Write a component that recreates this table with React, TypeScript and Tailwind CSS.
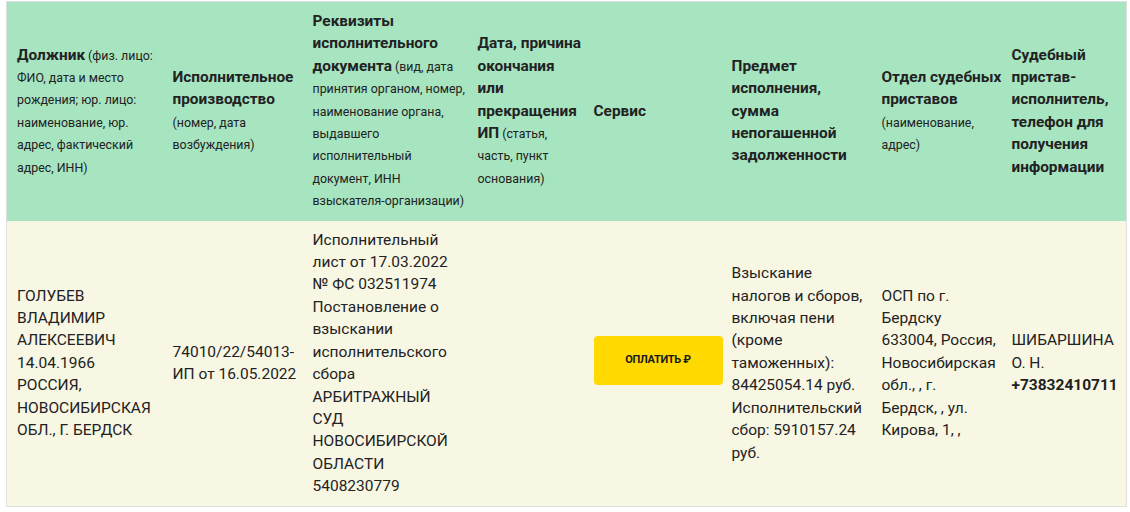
import React from "react";

const th = "align-middle text-left font-normal text-[12px] leading-[22.4px] pl-[10px] pr-0 pt-[9px] pb-[8px]";
const td = "align-middle text-left pl-[10px] pr-0 py-[8px]";
const B = ({ children }: { children: React.ReactNode }) => (
  <span className="font-bold text-[15.4px] leading-none">{children}</span>
);
const S = ({ children }: { children: React.ReactNode }) => (
  <span className="text-[12.4px] leading-none">{children}</span>
);

export default function App() {
  return (
    <div className="w-[1130px] h-[512px] bg-white pl-[6px] pt-[1px]" style={{ fontFamily: "Roboto, 'Noto Sans', sans-serif" }}>
      <table className="table-fixed w-[1120px] border-collapse border border-[#e0e0e0] text-[#222222]">
        <colgroup>
          <col className="w-[156px]" />
          <col className="w-[140px]" />
          <col className="w-[165px]" />
          <col className="w-[116px]" />
          <col className="w-[138px]" />
          <col className="w-[150px]" />
          <col className="w-[130px]" />
          <col className="w-[125px]" />
        </colgroup>
        <thead>
          <tr className="bg-[#a7e4c0] h-[218px]">
            <th className={th}>
              <B>Должник</B> <S>(физ. лицо: ФИО, дата и место рождения; юр. лицо: наименование, юр. адрес, фактический адрес, ИНН)</S>
            </th>
            <th className={th}>
              <B>Исполнительное производство</B> <S>(номер, дата возбуждения)</S>
            </th>
            <th className={th}>
              <B>Реквизиты исполнительного документа</B> <S>(вид, дата принятия органом, номер, наименование органа, выдавшего исполнительный документ, ИНН взыскателя-организации)</S>
            </th>
            <th className={th}>
              <B>Дата, причина окончания или прекращения ИП</B> <S>(статья, часть, пункт основания)</S>
            </th>
            <th className={th}>
              <B>Сервис</B>
            </th>
            <th className={th}>
              <B>Предмет исполнения, сумма непогашенной задолженности</B>
            </th>
            <th className={th}>
              <B>Отдел судебных приставов</B> <S>(наименование, адрес)</S>
            </th>
            <th className={`${th} pr-[6px]`}>
              <B>Судебный пристав-исполнитель, телефон для получения информации</B>
            </th>
          </tr>
        </thead>
        <tbody>
          <tr className="bg-[#f8f7e4] text-[15.5px] leading-[22.4px]">
            <td className={td}>
              ГОЛУБЕВ ВЛАДИМИР АЛЕКСЕЕВИЧ 14.04.1966 РОССИЯ, НОВОСИБИРСКАЯ ОБЛ., Г. БЕРДСК
            </td>
            <td className={td}>74010/22/54013-ИП от 16.05.2022</td>
            <td className={td}>
              Исполнительный<br />лист от 17.03.2022<br />№ ФС 032511974<br />Постановление о<br />взыскании<br />исполнительского<br />сбора<br />АРБИТРАЖНЫЙ<br />СУД<br />НОВОСИБИРСКОЙ<br />ОБЛАСТИ<br />5408230779
            </td>
            <td className={td}></td>
            <td className={td}>
              <button className="w-[129px] h-[49px] rounded-[4px] bg-[#ffd900] text-[11px] font-bold text-[#1a1a1a] tracking-[-0.3px] flex items-center justify-center -translate-y-[3px]">
                ОПЛАТИТЬ ₽
              </button>
            </td>
            <td className={td}>
              Взыскание налогов и сборов, включая пени (кроме таможенных): 84425054.14 руб. Исполнительский сбор: 5910157.24 руб.
            </td>
            <td className={td}>
              ОСП по г.<br />Бердску<br />633004, Россия,<br />Новосибирская<br />обл., , г.<br />Бердск, , ул.<br />Кирова, 1, ,
            </td>
            <td className={`${td} pr-[6px]`}>
              ШИБАРШИНА О. Н. <span className="font-bold">+73832410711</span>
            </td>
          </tr>
        </tbody>
      </table>
    </div>
  );
}
